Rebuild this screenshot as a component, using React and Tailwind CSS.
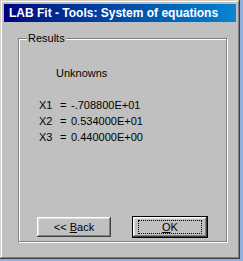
import React from 'react';

const results = [
  { name: 'X1', value: '-.708800E+01' },
  { name: 'X2', value: '0.534000E+01' },
  { name: 'X3', value: '0.440000E+00' },
];

const bevel =
  'shadow-[inset_-1px_-1px_#404040,inset_1px_1px_#ffffff,inset_-2px_-2px_#808080,inset_2px_2px_#dfdfdf]';

const WinButton = ({ children, isDefault }) => (
  <div className={isDefault ? 'border border-black' : 'p-px'}>
    <button
      className={`flex h-[20px] w-[74px] items-center justify-center bg-[#c0c0c0] text-[11px] text-black ${bevel}`}
    >
      {isDefault ? (
        <span className="flex h-[14px] w-[64px] items-center justify-center border border-dotted border-black">
          {children}
        </span>
      ) : (
        children
      )}
    </button>
  </div>
);

export default function App() {
  return (
    <div className="h-[261px] w-[243px] overflow-hidden bg-[#8fb0dc] font-['Liberation_Sans',Arial,sans-serif]">
      <div className="flex h-[259px] w-[240px] flex-col bg-[#c0c0c0] p-[4px] shadow-[inset_-1px_-1px_#404040,inset_1px_1px_#d4d0c8,inset_-2px_-2px_#808080,inset_2px_2px_#ffffff]">
        {/* title bar */}
        <div className="flex h-[18px] items-center bg-gradient-to-r from-[#000080] to-[#1084d0] pl-[5px]">
          <span className="text-[12px] font-bold leading-none text-white">
            LAB Fit - Tools: System of equations
          </span>
        </div>

        {/* client */}
        <div className="pl-[14px] pt-[16px]">
          <div className="relative h-[204px] w-[209px] border border-[#808080] shadow-[inset_1px_1px_#ffffff,1px_1px_#ffffff]">
            <span className="absolute -top-[7px] left-[8px] bg-[#c0c0c0] px-px text-[11px] leading-[13px] text-black">
              Results
            </span>

            <div className="pl-[37px] pt-[28px] text-[11px] leading-[13px] text-black">Unknowns</div>

            <div className="mt-[17px] grid grid-cols-[21px_11px_auto] pl-[20px] text-[11px] leading-[16px] text-black">
              {results.map(r => (
                <React.Fragment key={r.name}>
                  <span>{r.name}</span>
                  <span>=</span>
                  <span>{r.value}</span>
                </React.Fragment>
              ))}
            </div>

            <div className="mt-[71px] flex gap-[20px] pl-[17px]">
              <WinButton>
                &lt;&lt; <span className="ml-[3px] underline">B</span>ack
              </WinButton>
              <WinButton isDefault>
                <span className="underline">O</span>K
              </WinButton>
            </div>
          </div>
        </div>
      </div>
    </div>
  );
}
